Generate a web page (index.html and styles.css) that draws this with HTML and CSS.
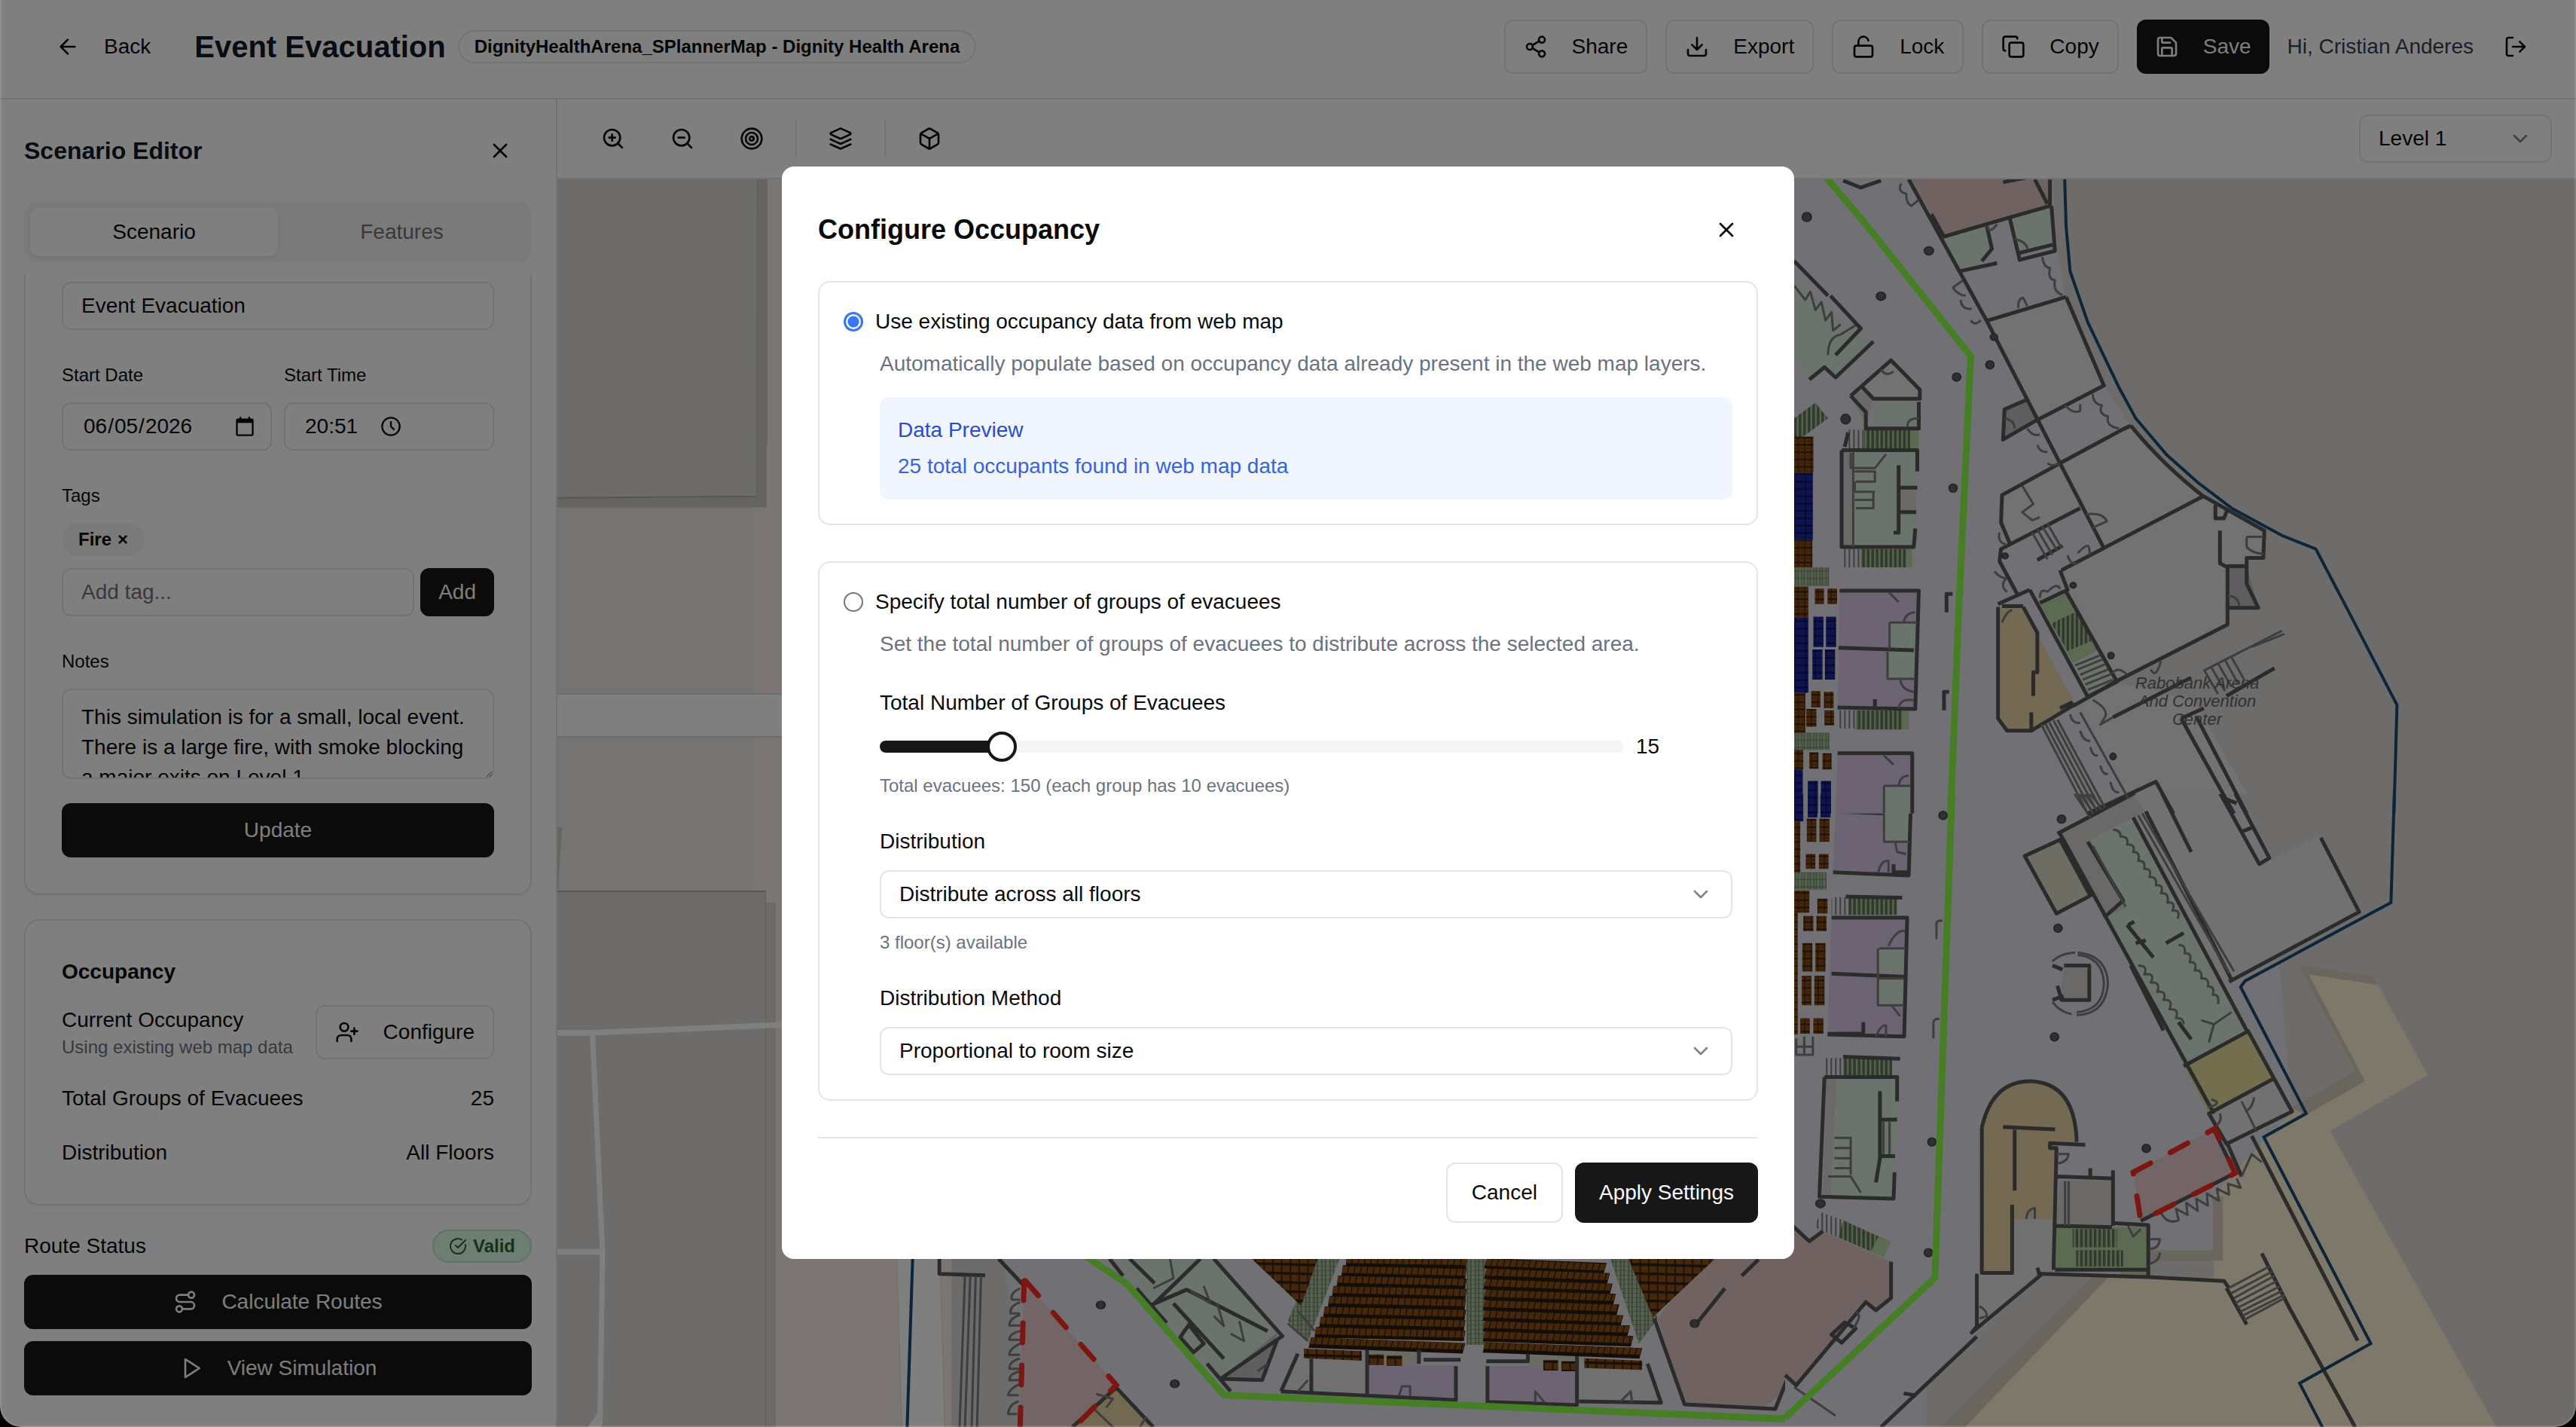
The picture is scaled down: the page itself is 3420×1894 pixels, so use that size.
FILE: index.html
```html
<!DOCTYPE html>
<html lang="en">
<head>
<meta charset="utf-8">
<title>Event Evacuation</title>
<link rel="stylesheet" href="styles.css">
</head>
<body>
<svg class="sprite" aria-hidden="true">
  <symbol id="i-back" viewBox="0 0 24 24"><path d="m12 19-7-7 7-7M19 12H5"/></symbol>
  <symbol id="i-share" viewBox="0 0 24 24"><circle cx="18" cy="5" r="3"/><circle cx="6" cy="12" r="3"/><circle cx="18" cy="19" r="3"/><path d="m8.6 13.5 6.8 4M15.4 6.5l-6.8 4"/></symbol>
  <symbol id="i-download" viewBox="0 0 24 24"><path d="M21 15v4a2 2 0 0 1-2 2H5a2 2 0 0 1-2-2v-4M7 10l5 5 5-5M12 15V3"/></symbol>
  <symbol id="i-unlock" viewBox="0 0 24 24"><rect x="3" y="11" width="18" height="11" rx="2"/><path d="M7 11V7a5 5 0 0 1 9.900-1"/></symbol>
  <symbol id="i-copy" viewBox="0 0 24 24"><rect x="8" y="8" width="14" height="14" rx="2"/><path d="M4 16c-1.100 0-2-.9-2-2V4c0-1.100.9-2 2-2h10c1.100 0 2 .9 2 2"/></symbol>
  <symbol id="i-save" viewBox="0 0 24 24"><path d="M15.200 3a2 2 0 0 1 1.400.6l3.800 3.800a2 2 0 0 1 .6 1.400V19a2 2 0 0 1-2 2H5a2 2 0 0 1-2-2V5a2 2 0 0 1 2-2z"/><path d="M17 21v-7a1 1 0 0 0-1-1H8a1 1 0 0 0-1 1v7M7 3v4a1 1 0 0 0 1 1h7"/></symbol>
  <symbol id="i-logout" viewBox="0 0 24 24"><path d="M9 21H5a2 2 0 0 1-2-2V5a2 2 0 0 1 2-2h4M16 17l5-5-5-5M21 12H9"/></symbol>
  <symbol id="i-x" viewBox="0 0 24 24"><path d="M18 6 6 18M6 6l12 12"/></symbol>
  <symbol id="i-zoomin" viewBox="0 0 24 24"><circle cx="11" cy="11" r="8"/><path d="m21 21-4.300-4.300M11 8v6M8 11h6"/></symbol>
  <symbol id="i-zoomout" viewBox="0 0 24 24"><circle cx="11" cy="11" r="8"/><path d="m21 21-4.300-4.300M8 11h6"/></symbol>
  <symbol id="i-target" viewBox="0 0 24 24"><circle cx="12" cy="12" r="10"/><circle cx="12" cy="12" r="6"/><circle cx="12" cy="12" r="2"/></symbol>
  <symbol id="i-layers" viewBox="0 0 24 24"><path d="m12.830 2.180a2 2 0 0 0-1.660 0L2.600 6.080a1 1 0 0 0 0 1.830l8.580 3.910a2 2 0 0 0 1.660 0l8.580-3.900a1 1 0 0 0 0-1.830Z"/><path d="m22 17.650-9.170 4.160a2 2 0 0 1-1.660 0L2 17.650M22 12.650l-9.170 4.160a2 2 0 0 1-1.660 0L2 12.650"/></symbol>
  <symbol id="i-box" viewBox="0 0 24 24"><path d="M21 8a2 2 0 0 0-1-1.730l-7-4a2 2 0 0 0-2 0l-7 4A2 2 0 0 0 3 8v8a2 2 0 0 0 1 1.730l7 4a2 2 0 0 0 2 0l7-4A2 2 0 0 0 21 16ZM3.300 7l8.700 5 8.700-5M12 22V12"/></symbol>
  <symbol id="i-down" viewBox="0 0 24 24"><path d="m6 9 6 6 6-6"/></symbol>
  <symbol id="i-userplus" viewBox="0 0 24 24"><path d="M16 21v-2a4 4 0 0 0-4-4H6a4 4 0 0 0-4 4v2M19 8v6M22 11h-6"/><circle cx="9" cy="7" r="4"/></symbol>
  <symbol id="i-check" viewBox="0 0 24 24"><path d="M21.800 10A10 10 0 1 1 17 3.340M9 11l3 3L22 4"/></symbol>
  <symbol id="i-route" viewBox="0 0 24 24"><circle cx="6" cy="19" r="3"/><path d="M9 19h8.500a3.500 3.500 0 0 0 0-7h-11a3.500 3.500 0 0 1 0-7H15"/><circle cx="18" cy="5" r="3"/></symbol>
  <symbol id="i-play" viewBox="0 0 24 24"><path d="m6 3 14 9-14 9z"/></symbol>
  <symbol id="i-clock" viewBox="0 0 24 24"><circle cx="12" cy="12" r="10"/><path d="M12 6v6l4 4"/></symbol>
  <symbol id="i-cal" viewBox="0 0 24 24"><rect x="3" y="4" width="18" height="18" rx="1"/><path d="M3 6h18" stroke-width="4"/><path d="M7 1v3M17 1v3"/></symbol>
</svg>

<div class="app">
  <header class="topbar">
    <button class="btn ghost"><svg class="icon"><use href="#i-back"/></svg>Back</button>
    <h1 class="page-title">Event Evacuation</h1>
    <span class="badge outline">DignityHealthArena_SPlannerMap - Dignity Health Arena</span>
    <div class="actions">
      <button class="btn"><svg class="icon"><use href="#i-share"/></svg>Share</button>
      <button class="btn"><svg class="icon"><use href="#i-download"/></svg>Export</button>
      <button class="btn"><svg class="icon"><use href="#i-unlock"/></svg>Lock</button>
      <button class="btn"><svg class="icon"><use href="#i-copy"/></svg>Copy</button>
      <button class="btn dark"><svg class="icon"><use href="#i-save"/></svg>Save</button>
      <span class="greeting">Hi, Cristian Anderes</span>
      <button class="btn ghost logout" aria-label="Log out"><svg class="icon"><use href="#i-logout"/></svg></button>
    </div>
  </header>

  <div class="body">
    <aside class="sidebar">
      <div class="side-head">
        <h2>Scenario Editor</h2>
        <button class="btn ghost" aria-label="Close editor"><svg class="icon"><use href="#i-x"/></svg></button>
      </div>
      <div class="tabs" role="tablist">
        <button class="tab active" role="tab" aria-selected="true">Scenario</button>
        <button class="tab" role="tab" aria-selected="false">Features</button>
      </div>
      <div class="side-scroll">
        <section class="card details">
          <input class="input" type="text" value="Event Evacuation" aria-label="Scenario name">
          <div class="pair">
            <div><label class="label" for="date">Start Date</label>
              <div class="input picker"><input id="date" type="date" value="2026-06-05"><svg class="glyph"><use href="#i-cal"/></svg></div></div>
            <div><label class="label" for="time">Start Time</label>
              <div class="input picker time"><input id="time" type="text" value="20:51"><svg class="glyph"><use href="#i-clock"/></svg></div></div>
          </div>
          <label class="label" for="tag">Tags</label>
          <span class="badge tag">Fire <button class="remove" aria-label="Remove Fire">×</button></span>
          <div class="tag-row">
            <input class="input" id="tag" type="text" placeholder="Add tag...">
            <button class="btn dark small">Add</button>
          </div>
          <label class="label" for="notes">Notes</label>
          <textarea class="input notes" id="notes">This simulation is for a small, local event. There is a large fire, with smoke blocking a major exits on Level 1.</textarea>
          <button class="btn dark wide update">Update</button>
        </section>
        <section class="card occupancy">
          <h3>Occupancy</h3>
          <div class="row current">
            <div><p>Current Occupancy</p><p class="hint">Using existing web map data</p></div>
            <button class="btn"><svg class="icon"><use href="#i-userplus"/></svg>Configure</button>
          </div>
          <div class="row"><span>Total Groups of Evacuees</span><span>25</span></div>
          <div class="row"><span>Distribution</span><span>All Floors</span></div>
        </section>
      </div>
      <div class="side-foot">
        <div class="row status"><span>Route Status</span><span class="badge valid"><svg class="mini"><use href="#i-check"/></svg>Valid</span></div>
        <button class="btn dark wide"><svg class="icon"><use href="#i-route"/></svg>Calculate Routes</button>
        <button class="btn dark wide"><svg class="icon"><use href="#i-play"/></svg>View Simulation</button>
      </div>
    </aside>

    <main class="stage">
      <div class="toolbar">
        <button class="btn ghost" aria-label="Zoom in"><svg class="icon"><use href="#i-zoomin"/></svg></button>
        <button class="btn ghost" aria-label="Zoom out"><svg class="icon"><use href="#i-zoomout"/></svg></button>
        <button class="btn ghost" aria-label="Recenter"><svg class="icon"><use href="#i-target"/></svg></button>
        <span class="sep"></span>
        <button class="btn ghost" aria-label="Layers"><svg class="icon"><use href="#i-layers"/></svg></button>
        <span class="sep"></span>
        <button class="btn ghost" aria-label="3D view"><svg class="icon"><use href="#i-box"/></svg></button>
        <div class="select level"><select aria-label="Level"><option>Level 1</option></select><svg class="icon"><use href="#i-down"/></svg></div>
      </div>
      <div class="map">
        <svg viewBox="740 238 2680 1656" preserveAspectRatio="xMidYMid slice" role="img" aria-label="Arena floor plan, level 1">
          <defs>
            <pattern id="brown" width="13" height="18" patternUnits="userSpaceOnUse"><rect width="13" height="18" fill="#3c2206"/><rect x="1" y="1" width="11" height="14" fill="#8a4e18"/><path d="M3 8h7" stroke="#5a3208" stroke-width="2"/></pattern>
            <pattern id="stand" width="13" height="36" patternUnits="userSpaceOnUse" patternTransform="skewY(4)"><rect width="13" height="36" fill="#30200e"/><rect x="1" y="1" width="11" height="26" fill="#8a4e18"/></pattern>
            <pattern id="blue" width="20" height="18" patternUnits="userSpaceOnUse"><rect width="20" height="18" fill="#0c1058"/><rect x="1" y="1" width="18" height="14" fill="#20299c"/></pattern>
            <pattern id="stair" width="9" height="20" patternUnits="userSpaceOnUse"><rect width="9" height="20" fill="#a8c498"/><rect width="5" height="20" fill="#62735c"/></pattern>
            <pattern id="step" width="9" height="20" patternUnits="userSpaceOnUse"><rect width="9" height="20" fill="#e2e0e8"/><rect width="3" height="20" fill="#7c7c7c"/></pattern>
            <pattern id="aisle" width="12" height="18" patternUnits="userSpaceOnUse"><rect width="12" height="18" fill="#aec4a0"/><path d="M0 2h12M2 0v18M9 0v18" stroke="#76886e" stroke-width="2"/></pattern>
          </defs>
          <rect x="740" y="238" width="2680" height="1656" fill="#dad8d4"/>
          <!-- parking lots and roads west of the arena -->
          <g transform="translate(730 230) scale(.3333 1.0612)">
            <path fill="#ebe9e5" d="M0 0H1100V1568H0z"/><path fill="#f6ede7" d="M811 0H1600V1568H811z"/>
            <path fill="#ccc9c0" d="M0 0H867V340H864V418H0zM30 818H48L33 896H30z"/><path fill="#d8d4cb" d="M860 912H900V1568H860z"/>
            <path fill="#dad9d5" stroke="#b0afaa" stroke-width="2" d="M0-5H826L823 404 0 406zM0 898H860V1600H0z"/>
            <path fill="#fff" stroke="#d8d8d8" stroke-width="2" d="M0 651H1100V705H0z"/>
            <g fill="none" stroke="#fff"><path stroke-width="7" d="M30 1075H170L924 1065M30 1349H205"/><path stroke-width="21" d="M170 1078 210 1350 200 1558 150 1580"/></g>
          </g>
          <!-- lower concourse and seating bowl -->
          <g transform="translate(1040 1650) scale(.8929 .3333)">
            <path fill="#fff" d="M168-20H232L240 732H176z"/><path stroke="#c8c8c8" stroke-width="1" d="M168-20 176 732M232-20 240 732"/>
            <path fill="#e2e0e8" d="M320-20H1700V740H350V400z"/>
            <path fill="#e0c5c1" d="M1385 0H1700V340L1505 560 1460 650 1340 642 1300 300z"/>
            <path fill="#d4e6d8" d="M470 0H630L742 370 650 540z"/><path fill="#c0bcc2" d="M735 355 710 545 650 540z"/>
            <path fill="#dac9e6" d="M870 487H1000V620L868 600zM1048 490H1180V640L1048 628z"/>
            <path fill="#e2e2e2" d="M765 440 868 460V600L740 590zM1183 500H1285L1305 635H1183z"/><path fill="#d6d6cc" d="M868 425H945V485H868zM1108 450H1183V490H1108z"/>
            <path fill="url(#aisle)" d="M800 0H836L780 390 750 310zM1016 0H1044V405H1016zM1222 0H1255L1300 300 1272 400z"/>
            <path fill="url(#stand)" d="M680 20H800L770 250zM1250 20H1402L1293 295z"/>
            <g fill="none"><path stroke="#2a1c0e" stroke-width="42" d="M837 70 1016 78M831 109 1015 120M824 150 1015 162M817 191 1015 203M811 232 1014 244M804 273 1014 286M798 314 1013 327M791 355 1013 369M783 396 1012 419M1044 80 1222 100M1044 121 1227 140M1043 163 1231 182M1043 205 1236 223M1042 247 1241 265M1042 288 1247 308M1042 330 1257 349M1042 371 1262 391M1042 415 1275 439"/><path stroke="#8a4e18" stroke-width="27" stroke-dasharray="8 1.500" d="M837 66 1016 74M831 105 1015 116M824 144 1015 156M817 185 1015 197M811 226 1014 238M804 267 1014 280M798 308 1013 321M791 349 1013 363M783 388 1012 411M1044 76 1222 96M1044 115 1227 134M1043 157 1231 176M1043 199 1236 217M1042 241 1241 259M1042 282 1247 302M1042 324 1257 343M1042 365 1262 385M1042 407 1275 431"/></g>
            <path fill="url(#stand)" d="M774 420 860 430V468L774 458zM870 443H893V485H870zM897 448H920V488H897zM1130 466H1152V507H1130zM1157 470H1180V510H1157zM1191 458 1277 468V505L1191 497z"/>
            <path fill="#e6c9cc" d="M358 150 495 565 430 740H350z"/><path fill="#e6d2a2" d="M495 575 550 740H425z"/>
            <g class="wall"><path d="M485 62 505 130M515 62 552 160M640 62 742 370 650 540 712 545 735 380M525 180 570 318M580 240 655 460M620 62 550 245M548 245 600 185 720 350M590 375 610 435 625 400 603 325zM630 480 665 590M1295 300 1340 642 1475 660 1495 525 1510 565 1568 340M1425 130 1450 65M1355 330 1400 180M740 590 765 440M740 590 1000 625V490M785 460V600M868 425V600M1047 490V632L1180 645V450M1285 480 1305 635 1183 630M952 464H1007M1045 470H1107V440M945 425V480M495 575 550 732M495 575 430 732M232 62V122L300 128M320 62 358 170"/></g>
            <g class="thin"><path d="M270 130 262 732M278 130 270 732M286 130 280 732M294 130 288 732M575 62 580 140 550 180M605 190 635 240 625 170M640 290 655 330 645 240M665 360 685 390 678 310M750 320 780 390M765 270 790 350M915 610 920 570 932 570V610M1118 630V590L1132 635M1245 630 1260 590 1262 635M765 590 780 545M705 510 720 480M480 655 490 620 465 600M460 655 490 732M530 732 540 690"/><path d="M352 180Q336 200 340 225H352M352 235Q336 250 338 280H352M352 285Q336 300 336 328H352M352 350Q336 360 336 385H352M352 400Q336 420 336 445H352M352 460Q336 470 336 500H352M352 510Q336 520 336 545H352M352 560Q336 580 334 605H350M350 630Q336 640 334 680H348"/></g>
            <g class="post"><ellipse cx="472" cy="246" rx="6" ry="16"/><ellipse cx="582" cy="560" rx="6" ry="16"/><ellipse cx="1355" cy="320" rx="6" ry="16"/></g>
            <path class="zone" d="M360 150 495 565 430 740M358 150 352 740"/>
            <path class="route" d="M420 0 510 160 655 605 1490 700 1568 495"/><path class="border" d="M193 0 184 740"/>
          </g>
          <!-- south-east wing -->
          <g transform="translate(2370 1050) scale(.6697 .5383)">
            <path fill="#fdf1d6" d="M1017 428 1165 455 1274 700 1080 838 1420 1590H290L605 1200H850V740L1005 790 1130 690z"/>
            <path fill="#d4cdbc" d="M1017 428 1165 455 1175 478 1038 452 1150 715 1030 800 1005 780 1130 690zM720 1132H848V1000H868V1158H720zM605 1200H640L340 1590H290z"/>
            <path fill="#e2e0e8" d="M0-10H880L960 160 1005 790 890 940 848 1000V1132H720V1200L500 1190 380 1340 180 1590H0z"/>
            <path fill="#e2e2e2" d="M680 0H850L940 180 1060 110 1138 298 880 468 1005 790 875 870 690 80zM380 1190H500L380 1320zM455 1060H530V1180H450z"/>
            <path fill="#d6d3d0" d="M545 100 690 10 715 50 605 120 675 290 632 312zM545 960H648V1072H535zM553 430H600V515H545zM82 708H100V1000H75z"/>
            <path fill="#dddbc8" d="M475 160 545 120 605 258 538 302z"/>
            <path fill="#d4e6d8" d="M605 120 690 78 912 590 790 675 630 315 675 290zM102 708H222L215 1003H90z"/>
            <path fill="#e6dc9c" d="M790 678 918 592 970 708 840 795z"/>
            <path fill="#e8d2a4" d="M392 830Q410 720 487 718 570 720 578 865L535 868 530 1055H455L448 1190H385z"/>
            <path fill="#b6d4a2" d="M535 1075H720V1195H665V1180H535zM70 1040 210 1110 195 1150 130 1110z"/>
            <path fill="url(#stair)" d="M570 1080H658V1125H570zM577 1132H670V1172H577zM125 262H222V305H125zM115 658H212V702H115zM115 1058 185 1098 170 1135 105 1100z"/>
            <path fill="url(#step)" d="M92 262H125V305H92zM80 658H115V702H80zM70 1038 115 1058 105 1100 58 1075z"/>
            <path fill="#e0c5c1" d="M0 1050 48 1110 75 1085 210 1160V1250L180 1280 160 1260 22 1465 0 1440z"/>
            <path fill="#dac9e6" d="M102-10H247L245 205 95 195zM92 312H242L236 605 84 590z"/>
            <path fill="#d4e6d8" d="M196-10H247V125H193zM186 388H240V450H184zM184 462H236V528H183z"/>
            <path fill="url(#blue)" d="M18-10H36V75H18zM45-10H64V65H45zM70-10H90V65H70z"/>
            <path fill="url(#brown)" d="M18 75H30V200H18zM43 68H62V125H43zM68 68H88V125H68zM41 155H60V192H41zM67 155H86V192H67zM18 245H48V300H18zM64 265H84V302H64zM36 308H56V345H36zM62 308H82V345H62zM34 375H54V445H34zM60 375H80V445H60zM33 455H52V528H33zM58 455H78V528H58zM30 560H49V598H30zM56 560H76V598H56zM18 300H25V600H18z"/>
            <path fill="url(#aisle)" d="M18 200H82V243H18z"/>
            <path fill="#e6c9cc" d="M690 940 852 832 892 942 705 1060z"/>
            <g class="wall"><path d="M540 105 700 0M475 160 545 120 605 258 538 302zM545 105 850 795M690 65 915 590M715 50 885 465M745 0 805 150M790 678 918 592 1005 790 875 870 840 795 970 708M880 470 1138 298 1062 115M860 0 940 180 960 165 890 0M875 20 895 30M905 100 925 90M678 330 730 410M680 330 692 322M695 375 715 368M685 430 750 590M780 570 805 612M600 125 670 270 632 312M755 375 790 350M390 830V1188H450V1020M455 835V985M432 828 535 834M595 872 525 868V880H538L532 1180M390 830Q410 715 487 715 575 720 578 865M540 950 650 955V1072M648 1065 720 1070V1198L500 1190M535 1072 648 1075M535 1180H720M380 1190V1320L370 1335 510 1190M500 1175 505 1195M380 1345 190 1568M605 930V955M650 935V955M720 1198 870 1208 880 1225"/>
              <path d="M553 430H603V515H548L540 480M530 430 550 440M530 515 552 505M705 1060 892 942 850 835M925 850 1135 1355M877 870 905 950M945 1140 1000 1275 1130 1568M875 1225 915 1315M102 50 195 55M95 200 245 208 250 0M92 312H242L236 605 84 600M92 450 236 458M78 705H222V765M78 705 68 1000 215 1005 217 940M188 740V905L180 965M222 810H190M218 900H190M155 570V598H84M215 180V200H245M0 1055 48 1110 75 1085M210 1160V1250L180 1280 160 1260 22 1465 0 1440M92 1340 118 1310 140 1325 112 1360zM235 1485 260 1490M120 260 232 263M115 655 228 660"/></g>
            <g class="thin"><path d="M196 0V125H247M186 388H240M184 388V528H236M184 462H236M218 125 222 150 240 155M185 200Q190 170 205 172V200M205 382Q220 340 238 345M212 530 228 555M180 605Q190 575 200 578V605M98 855H130V890M98 880H130V920M98 905H130V945M98 930H130M85 950H130L150 990M195 815V895M207 815V895M538 895H562Q560 915 540 918M478 1055Q480 1030 495 1028V1055M562 962V1072M555 962V1072M680 1072 690 1098 705 1080M722 1105H743Q740 1130 724 1128M722 1165Q742 1160 743 1138M385 1270Q400 1280 400 1295L385 1300M140 1285Q155 1290 135 1325M845 760Q870 770 838 780M905 765 935 840M930 755Q925 785 912 790M850 830Q868 815 862 795M570 0 605 65M580 0 612 55M590 0 620 50M600 0 630 45"/>
              <path d="M580 398Q638 405 640 475 635 550 578 552M580 404Q630 410 632 475 630 540 578 545M530 420Q545 400 575 398M530 520Q545 545 568 550M700 60 880 450M708 55 890 445M610 135 675 285"/>
              <path d="M650 95Q665 95 665 112 682 112 678 132 695 130 690 150 705 150 700 172 715 170 712 192 728 190 722 212 738 210 735 232 752 230 745 252 762 250 758 275 775 272 768 295 785 292 778 315M780 380Q795 378 792 400 808 398 802 422 818 420 812 442 828 440 825 462 842 460 838 482 852 480 848 502 862 500 858 525M700 430Q720 430 712 452 735 448 725 472 745 470 738 495 758 492 750 515 770 512 762 538 782 535 775 560 790 558 790 575M825 565 850 575 885 545M850 575 840 620M745 1040Q758 1070 780 1058L775 1030 798 1045 795 1015 818 1035 815 1005 838 1022 836 992 860 1010 856 980 880 995 878 968 903 978 895 955M905 950 925 895 945 915"/>
              <path d="M880 1225 960 1172M885 1238 965 1185M890 1250 970 1195M893 1262 975 1208M897 1274 982 1220M902 1284 986 1232M906 1294 990 1242M910 1304 990 1250M300 365V325Q302 318 312 320M294 610V570Q296 560 306 562M22 610V650H55V605M38 605V650M22 630H55M100 1540 18 1470"/></g>
            <g class="post"><ellipse cx="548" cy="69" rx="8" ry="10"/><ellipse cx="541" cy="338" rx="8" ry="10"/><ellipse cx="534" cy="606" rx="8" ry="10"/><ellipse cx="716" cy="881" rx="8" ry="10"/><ellipse cx="313" cy="60" rx="8" ry="10"/><ellipse cx="291" cy="865" rx="8" ry="10"/><ellipse cx="284" cy="1138" rx="8" ry="10"/><ellipse cx="70" cy="1017" rx="9" ry="10"/></g>
            <path class="zone" d="M690 940 852 832 892 942 705 1060z"/>
            <path class="route" d="M331-5 297 1200 0 1545"/><path class="border" d="M1208-5 1201 275 912 468 903 483 1033 795 949 853 1161 1362 1020 1460 1070 1580"/>
          </g>
          <!-- north-east wing -->
          <g transform="translate(2370 230) scale(.6697 .542)">
            <path fill="#e2e0e8" d="M0 0H530L540 190 555 300 632 522 685 618 830 790 950 875V945L875 960V1105L655 1245 810 1290 915 1520H0z"/>
            <path fill="#e0c5c1" d="M240 0H528L520 80 315 152z"/>
            <path fill="#d4e6d8" d="M315 158 400 130 410 185 388 218 345 240zM445 108 525 85 532 170 465 192zM0 240 130 380 175 412 100 500 78 475 48 505 0 430zM175 560H265V625H175zM122 680H262V915H112z"/>
            <path fill="#e4e4e4" d="M400 362 555 305 632 520 498 605zM545 710 685 618 828 790 632 918zM430 788 540 712 585 820 445 905 428 855zM548 972 828 790 950 875 948 942 875 960V1105L655 1245zM210 458 267 530V552H172L150 525zM590 1310 655 1245 810 1290 915 1520H680z"/>
            <path fill="#bebac0" d="M435 578 480 555 498 605 433 650zM877 962H915L938 1062H877z"/>
            <path fill="#d6d3d0" d="M115 680H135V915H112zM130 545 160 528 175 555 160 620zM225 775H260V825H225z"/>
            <path fill="#e8d2a4" d="M422 1062H472L500 1130 575 1300 488 1367H440L418 1335z"/>
            <path fill="#b6d4a2" d="M505 1052 558 1020 620 1168 570 1200zM157 628H265V675H157zM150 920H252V965H150zM140 1315H245V1362H140z"/>
            <path fill="url(#stair)" d="M157 628H248V675H157zM150 920H240V965H150zM140 1315H232V1362H140zM528 1102 580 1072 608 1145 560 1170zM18 600 60 562 85 600 30 650H18z"/>
            <path fill="url(#step)" d="M120 628H157V675H120zM115 920H150V965H115zM104 1315H140V1360H104z"/>
            <path fill="#d4e6d8" d="M570 1200 620 1175 658 1245 600 1282z"/>
            <path fill="#dac9e6" d="M108 1022H265L258 1312 104 1308zM104 1420H252V1568H100z"/>
            <path fill="#d4e6d8" d="M207 1100H262V1165H207zM205 1172H258V1238H203zM196 1500H248V1568H194z"/>
            <path fill="url(#aisle)" d="M18 965H87V1010H18zM18 1370H88V1412H18z"/>
            <path fill="url(#brown)" d="M18 645H56V733H18zM18 898H54V965H18zM18 1012H46V1088H18zM59 1017H77V1055H59zM84 1017H103V1055H84zM18 1272H40V1370H18zM52 1268H70V1308H52zM77 1270H96V1310H77zM42 1312H62V1355H42zM78 1315H97V1352H78zM18 1412H36V1460H18zM48 1418H66V1458H48zM74 1420H92V1460H74z"/>
            <path fill="url(#blue)" d="M18 733H55V898H18zM18 1088H46V1272H18zM56 1086H76V1160H56zM81 1086H101V1160H81zM54 1166H74V1240H54zM79 1166H99V1240H79zM18 1460H35V1568H18zM45 1488H65V1568H45zM71 1488H91V1568H71z"/>
            <g class="wall"><path d="M245 15 400 362 545 710 632 918M290 100 315 155 445 108 525 80V15M528 80 535 190 465 212 445 108M400 130 410 185 390 215M345 240 420 220M465 195 530 175M398 362 557 303M557 303 632 520 498 605 432 652 435 578 478 555M545 710 668 628 685 618M685 618Q750 715 828 790M545 710 430 788 428 855 445 905M585 820 428 920 425 950 460 1030M830 790 548 972M828 790 950 875 948 942H915V962H877V1105L655 1245 570 1305M862 875V955L877 965M915 965V1005L938 1064H877V962M853 812V845H870L878 820M545 972 560 1020 505 1052M555 1020 658 1245 600 1282 485 1020M422 1055 485 1020M422 1062V1335L440 1365H488L575 1300M472 1062 500 1125V1222H492V1280M488 1320V1367M545 1310 570 1295M650 1332 805 1235M430 1060H472"/>
              <path d="M90 300 150 380 100 445M85 300 18 215M130 545 210 458 267 530V552H175L150 520M130 545 160 585V625H265V560M112 678H262V730M112 678V915H255L258 870M225 715V880H215M225 770H262M225 830H260M108 1022 265 1022 258 1312 104 1308M106 1162 255 1168M104 1420H252V1568M178 1288V1312M320 1075V1030H332M315 1315V1270H325M785 1335 890 1568M815 1330 915 1568M785 1335 830 1310M875 1280 970 1212M600 1568 735 1490 770 1568M175 412 100 500 78 475 48 505M125 635 118 670M115 18 150 35 190 18M495 15 520 75M432 22 480 10M500 947 550 912"/></g>
            <g class="thin"><path d="M135 680V915M138 730H178V755H140M138 755V780H178M138 780H175V800H140M138 800H175V820H140M130 685V722H178L200 688M190 480Q200 500 215 485M265 600Q240 600 243 622M207 1100V1165M207 1100H262M203 1172V1238H258M235 1098Q240 1075 258 1075M205 1025 225 1050M228 1238Q230 1265 255 1270M225 1310Q228 1285 255 1290M196 1500H248M196 1500V1568M195 1425 215 1448M225 1500Q228 1475 245 1475M470 765 492 810 470 830 490 850 505 842M490 880 520 945M500 872 530 935M510 865 540 925M520 858 548 918M597 835Q630 830 638 852L610 868M830 1215 858 1275M845 1210 872 1268M858 1200 885 1258M872 1192 898 1250M885 1185 910 1240M830 1218 985 1120M925 1160 990 1128M575 1205 625 1180M580 1215 630 1190M585 1228 635 1202M590 1240 640 1215M595 1252 645 1227M600 1265 650 1240M508 1350 600 1568M516 1348 610 1568M524 1345 618 1562M532 1340 626 1558M540 1338 634 1554"/>
              <path d="M230 25Q222 45 240 50 240 75 250 80L265 65M18 275 40 310 50 290 60 335 72 315 80 360 92 340 95 385 110 370M85 445Q85 400 110 395L140 372M400 130Q405 150 420 125M455 160Q480 170 480 185M510 205Q512 230 525 232 520 260 535 262 530 290 550 298M332 280Q350 265 352 262M332 280Q345 300 358 300M348 310Q350 335 370 332M368 360Q375 375 388 360M462 330Q462 305 472 305L480 325M555 568Q570 590 585 582L585 565M610 540Q610 565 628 568 620 590 640 595 635 620 662 625M480 625Q490 645 505 640M500 665Q505 685 520 682M520 710Q530 720 545 710M560 935Q565 960 580 955M580 930Q600 905 602 915L605 935M415 975Q425 990 438 992 425 1010 440 1025M425 880Q420 905 440 910M505 1040Q505 1015 520 1025 540 1000 545 1018M430 1100Q440 1070 450 1070M610 1290Q640 1310 635 1330L625 1350 650 1332M565 1325Q570 1350 585 1345M585 1365Q590 1390 605 1390M605 1405Q610 1430 620 1425M625 1450Q630 1475 640 1470M645 1490Q650 1520 662 1515M585 1320 680 1530M725 1215Q735 1240 745 1195M915 890V915Q925 930 948 932M915 890H948M877 1035Q900 1035 900 1062M648 1225Q660 1205 678 1228M435 600Q455 605 455 625"/></g>
            <g class="post"><ellipse cx="43" cy="107" rx="9" ry="11"/><ellipse cx="285" cy="190" rx="9" ry="10"/><ellipse cx="190" cy="301" rx="9" ry="10"/><ellipse cx="406" cy="469" rx="8" ry="10"/><ellipse cx="340" cy="499" rx="8" ry="10"/><ellipse cx="120" cy="602" rx="9" ry="12"/><ellipse cx="333" cy="771" rx="8" ry="10"/><ellipse cx="571" cy="1009" rx="6" ry="7"/><ellipse cx="646" cy="1181" rx="6" ry="8"/><ellipse cx="650" cy="1428" rx="6" ry="8"/><ellipse cx="436" cy="937" rx="6" ry="7"/><ellipse cx="414" cy="401" rx="7" ry="8"/></g>
            <path class="route" d="M78 5 160 125 368 448 345 1050 328 1568"/>
            <path class="border" d="M554 5 557 130 565 240 600 365 662 525 695 600 757 690 818 757 885 820 985 887 1052 920 1120 1080 1213 1302 1207 1568"/>
          </g>
          <g class="place"><text x="2917" y="914">Rabobank Arena</text><text x="2917" y="938">And Convention</text><text x="2917" y="962">Center</text></g>
        </svg>
      </div>
    </main>
  </div>
</div>

<div class="overlay">
  <section class="modal" role="dialog" aria-modal="true" aria-labelledby="modal-title">
    <header class="modal-head">
      <h2 id="modal-title">Configure Occupancy</h2>
      <button class="btn ghost" aria-label="Close"><svg class="icon"><use href="#i-x"/></svg></button>
    </header>
    <div class="option">
      <label class="choice"><input type="radio" name="mode" checked>Use existing occupancy data from web map</label>
      <div class="option-body">
        <p class="desc">Automatically populate based on occupancy data already present in the web map layers.</p>
        <div class="preview"><p class="preview-title">Data Preview</p><p>25 total occupants found in web map data</p></div>
      </div>
    </div>
    <div class="option second">
      <label class="choice"><input type="radio" name="mode">Specify total number of groups of evacuees</label>
      <div class="option-body">
        <p class="desc">Set the total number of groups of evacuees to distribute across the selected area.</p>
        <label class="label large" for="groups">Total Number of Groups of Evacuees</label>
        <div class="slider"><input id="groups" type="range" min="0" max="100" value="15"><output for="groups">15</output></div>
        <p class="note">Total evacuees: 150 (each group has 10 evacuees)</p>
        <label class="label large" for="dist">Distribution</label>
        <div class="select"><select id="dist"><option>Distribute across all floors</option></select><svg class="icon"><use href="#i-down"/></svg></div>
        <p class="note">3 floor(s) available</p>
        <label class="label large" for="method">Distribution Method</label>
        <div class="select"><select id="method"><option>Proportional to room size</option></select><svg class="icon"><use href="#i-down"/></svg></div>
      </div>
    </div>
    <footer class="modal-foot">
      <button class="btn big">Cancel</button>
      <button class="btn dark big">Apply Settings</button>
    </footer>
  </section>
</div>
<div class="frame"></div>
</body>
</html>
```
FILE: styles.css
```css
* { box-sizing: border-box; }
html { background: #000; }
body {
  margin: 0;
  font: 28px/40px "Liberation Sans", Arial, sans-serif;
  color: #0a0a0a;
}
h1, h2, h3, p { margin: 0; }
button, input, select, textarea { font: inherit; color: inherit; }
.sprite { display: none; }
.icon, .mini, .glyph {
  flex: none;
  fill: none;
  stroke: currentColor;
  stroke-width: 2;
  stroke-linecap: round;
  stroke-linejoin: round;
}
.icon { width: 32px; height: 32px; }
.mini { width: 24px; height: 24px; }
.glyph { width: 28px; height: 28px; stroke-linecap: butt; }

.app { display: flex; flex-direction: column; height: 100vh; background: #fff; }

/* buttons */
.btn {
  display: inline-flex;
  align-items: center;
  justify-content: center;
  gap: 32px;
  height: 72px;
  padding: 0 24px;
  border: 2px solid #e5e5e5;
  border-radius: 12px;
  background: #fff;
  white-space: nowrap;
}
.btn.ghost { border-color: transparent; background: none; }
.btn.dark { border: 0; background: #171717; color: #fafafa; }
.btn.wide { width: 100%; }
.btn.small { height: 64px; }
.btn.big { height: 80px; padding: 0 32px; }

.badge {
  display: inline-flex;
  align-items: center;
  gap: 8px;
  height: 44px;
  padding: 0 20px;
  border: 2px solid transparent;
  border-radius: 22px;
  font-size: 24px;
  font-weight: bold;
  white-space: nowrap;
}
.badge.outline { border-color: #e5e5e5; }
.badge.tag { background: #f5f5f5; }
.badge.valid { border-color: #b9e8c6; background: #dcfce7; color: #2c6434; }
.remove { padding: 0; border: 0; background: none; }

/* top bar */
.topbar {
  display: flex;
  align-items: center;
  padding: 26px 48px 32px;
  border-bottom: 2px solid #e5e5e5;
}
.page-title { margin: 0 16px 0 32px; font-size: 40px; color: #111827; }
.actions { display: flex; align-items: center; gap: 24px; margin-left: auto; }
.greeting { color: #374151; }
.logout { padding: 0 14px; }

.body { display: flex; flex: 1; min-height: 0; }

/* sidebar */
.sidebar {
  flex: none;
  display: flex;
  flex-direction: column;
  width: 740px;
  padding: 32px;
  border-right: 2px solid #e5e5e5;
}
.side-head { display: flex; align-items: center; justify-content: space-between; }
.side-head h2 { font-size: 32px; color: #111827; }
.tabs {
  display: grid;
  grid-template-columns: 1fr 1fr;
  margin-top: 32px;
  padding: 8px;
  border-radius: 16px;
  background: #f5f5f5;
}
.tab { height: 64px; border: 0; border-radius: 12px; background: none; color: #737373; }
.tab.active { background: #fff; color: #0a0a0a; box-shadow: 0 2px 6px rgba(0, 0, 0, .1); }
.side-scroll { display: flex; flex-direction: column; gap: 32px; margin-top: 16px; }
.card {
  padding: 48px;
  border: 2px solid #e5e5e5;
  border-radius: 20px;
  box-shadow: 0 2px 4px rgba(0, 0, 0, .05);
}
.details { padding-top: 10px; border-top: 0; border-radius: 0 0 20px 20px; }
.label { display: block; margin: 40px 0 16px; font-size: 24px; }
.label.large { margin: 38px 0 18px; font-size: 28px; }
.input {
  display: block;
  width: 100%;
  height: 64px;
  padding: 0 24px;
  border: 2px solid #e5e5e5;
  border-radius: 12px;
  background: transparent;
}
.input::placeholder { color: #737373; opacity: 1; }
.pair { display: grid; grid-template-columns: 1fr 1fr; gap: 16px; }
.picker { display: flex; align-items: center; justify-content: space-between; padding: 0 20px 0 26px; }
.picker input { flex: 1; min-width: 0; padding: 0; border: 0; background: none; }
.picker input::-webkit-calendar-picker-indicator { display: none; }
.picker.time { justify-content: flex-start; gap: 24px; }
.picker.time input { flex: none; width: 76px; }
.tag-row { display: flex; gap: 8px; margin-top: 16px; }
.notes { height: 120px; padding: 16px 24px; overflow: hidden; resize: vertical; }
.update { margin-top: 32px; }
.occupancy { display: grid; gap: 32px; }
.occupancy h3 { font-size: 28px; margin-bottom: -8px; }
.row { display: flex; align-items: center; justify-content: space-between; }
.hint { font-size: 24px; line-height: 32px; color: #6b7280; }
.side-foot { display: grid; gap: 16px; margin-top: 32px; }

/* map stage */
.stage { flex: 1; display: flex; flex-direction: column; min-width: 0; }
.toolbar {
  display: flex;
  align-items: center;
  gap: 8px;
  height: 106px;
  padding: 0 32px;
  border-bottom: 2px solid #e5e5e5;
}
.sep { width: 2px; height: 48px; margin: 0 8px; background: #e5e5e5; }
.select { position: relative; }
.select select {
  appearance: none;
  width: 100%;
  height: 64px;
  padding: 0 72px 0 24px;
  border: 2px solid #e5e5e5;
  border-radius: 12px;
  background: #fff;
}
.select .icon { position: absolute; right: 26px; top: 16px; opacity: .5; pointer-events: none; }
.level { width: 256px; margin-left: auto; }
.map { flex: 1; min-height: 0; }
.map > svg { display: block; width: 100%; height: 100%; }
.wall, .thin { fill: none; stroke-linejoin: round; }
.wall path { stroke: #565656; stroke-width: 5; vector-effect: non-scaling-stroke; }
.thin path { stroke: #7c7c7c; stroke-width: 3; vector-effect: non-scaling-stroke; }
.post { fill: #606060; stroke: #484848; stroke-width: 3; }
.route { fill: none; stroke: #8cfc4a; stroke-width: 9; vector-effect: non-scaling-stroke; }
.border { fill: none; stroke: #184a72; stroke-width: 4; vector-effect: non-scaling-stroke; }
.zone {
  fill: none;
  stroke: #f62c22;
  stroke-width: 7;
  stroke-dasharray: 26 30;
  stroke-linecap: round;
  vector-effect: non-scaling-stroke;
}
.place {
  font-size: 22px;
  font-style: italic;
  text-anchor: middle;
  fill: #646464;
}

/* dialog */
.overlay {
  position: fixed;
  inset: 0;
  display: grid;
  place-items: center;
  padding-bottom: 2px;
  background: rgba(0, 0, 0, .5);
}
.modal {
  width: 1344px;
  max-width: 100%;
  padding: 48px;
  border-radius: 16px;
  background: #fff;
}
.modal-head { display: flex; align-items: center; justify-content: space-between; margin-bottom: 32px; }
.modal-head h2 { font-size: 36px; }
.option { padding: 32px; border: 2px solid #e5e5e5; border-radius: 16px; }
.option.second { margin-top: 48px; }
.choice { display: flex; align-items: center; gap: 16px; }
.choice input {
  appearance: none;
  width: 26px;
  height: 26px;
  margin: 0;
  border: 2px solid #767676;
  border-radius: 50%;
}
.choice input:checked {
  border: 3px solid #3478f6;
  background: radial-gradient(circle, #3478f6 7px, #fff 8px);
}
.option-body { margin: 16px 0 0 48px; }
.desc { color: #6b7280; }
.preview {
  display: grid;
  gap: 8px;
  margin-top: 24px;
  padding: 24px;
  border-radius: 12px;
  background: #f0f5fe;
  color: #3863e2;
}
.preview-title { color: #2b4bd2; }
.slider { display: flex; align-items: center; gap: 16px; }
.slider output { width: 128px; }
.slider input {
  --fill: calc(20px + (100% - 40px) * .15);
  flex: 1;
  appearance: none;
  height: 40px;
  margin: 0;
  background: none;
}
.slider input::-webkit-slider-runnable-track {
  height: 16px;
  border-radius: 8px;
  background: linear-gradient(to right, #171717 var(--fill), #f5f5f5 var(--fill));
}
.slider input::-webkit-slider-thumb {
  appearance: none;
  width: 40px;
  height: 40px;
  margin-top: -12px;
  border: 4px solid #171717;
  border-radius: 50%;
  background: #fff;
}
.note { margin-top: 16px; font-size: 24px; line-height: 32px; color: #6b7280; }
.modal-foot {
  display: flex;
  justify-content: flex-end;
  gap: 16px;
  margin-top: 48px;
  padding-top: 32px;
  border-top: 2px solid #e5e5e5;
}

/* rounded window edge */
.frame {
  position: fixed;
  inset: -60px 0 0;
  border-radius: 0 0 28px 28px;
  box-shadow: inset 0 0 0 2px rgba(255, 255, 255, .12), 0 0 0 60px #000;
  pointer-events: none;
}
```
